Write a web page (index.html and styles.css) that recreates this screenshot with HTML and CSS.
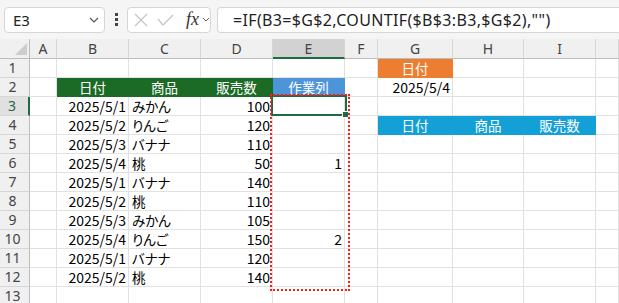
FILE: index.html
```html
<!DOCTYPE html>
<html>
<head>
	<meta charset="utf-8" />
	<title>Excel - 作業列</title>
	<link rel="stylesheet" href="styles.css">
</head>
<body>
<div class="toolbar">
	<div class="namebox">
		<span>E3</span>
		<svg class="chev" width="10" height="6" viewBox="0 0 10 6"><path d="M1 1l4 4 4-4" fill="none" stroke="#555" stroke-width="1.2"/></svg>
	</div>
	<div class="kebab"><i></i><i></i><i></i></div>
	<div class="fxbox">
		<svg width="14" height="14" viewBox="0 0 14 14"><path d="M1 1l12 12M13 1L1 13" stroke="#c4c4c4" stroke-width="1.2"/></svg>
		<svg class="ok" width="17" height="12" viewBox="0 0 17 12"><path d="M1 5l5 6L16 1" fill="none" stroke="#c4c4c4" stroke-width="1.2"/></svg>
		<span class="fx">fx</span>
		<svg width="8" height="5" viewBox="0 0 8 5"><path d="M1 1l3 3 3-3" fill="none" stroke="#666" stroke-width="1"/></svg>
	</div>
	<div class="formula">=IF(B3=$G$2,COUNTIF($B$3:B3,$G$2),"")</div>
</div>

<div class="sheet">
	<div class="row head">
		<div class="corner"><span class="tri"></span></div>
		<div>A</div><div>B</div><div>C</div><div>D</div><div class="sel">E</div><div>F</div><div>G</div><div>H</div><div>I</div><div></div>
	</div>
	<div class="row">
		<div class="rh">1</div>
		<div></div><div></div><div></div><div></div><div></div><div></div><div class="fill orange">日付</div><div></div><div></div><div></div>
	</div>
	<div class="row">
		<div class="rh">2</div>
		<div></div><div class="fill green">日付</div><div class="fill green">商品</div><div class="fill green">販売数</div><div class="fill blue">作業列</div><div></div><div class="num">2025/5/4</div><div></div><div></div><div></div>
	</div>
	<div class="row">
		<div class="rh sel">3</div>
		<div></div><div class="num">2025/5/1</div><div>みかん</div><div class="num">100</div><div></div><div></div><div></div><div></div><div></div><div></div>
	</div>
	<div class="row">
		<div class="rh">4</div>
		<div></div><div class="num">2025/5/2</div><div>りんご</div><div class="num">120</div><div></div><div></div><div class="fill cyan">日付</div><div class="fill cyan">商品</div><div class="fill cyan">販売数</div><div></div>
	</div>
	<div class="row">
		<div class="rh">5</div>
		<div></div><div class="num">2025/5/3</div><div>バナナ</div><div class="num">110</div><div></div><div></div><div></div><div></div><div></div><div></div>
	</div>
	<div class="row">
		<div class="rh">6</div>
		<div></div><div class="num">2025/5/4</div><div>桃</div><div class="num">50</div><div class="num">1</div><div></div><div></div><div></div><div></div><div></div>
	</div>
	<div class="row">
		<div class="rh">7</div>
		<div></div><div class="num">2025/5/1</div><div>バナナ</div><div class="num">140</div><div></div><div></div><div></div><div></div><div></div><div></div>
	</div>
	<div class="row">
		<div class="rh">8</div>
		<div></div><div class="num">2025/5/2</div><div>桃</div><div class="num">110</div><div></div><div></div><div></div><div></div><div></div><div></div>
	</div>
	<div class="row">
		<div class="rh">9</div>
		<div></div><div class="num">2025/5/3</div><div>みかん</div><div class="num">105</div><div></div><div></div><div></div><div></div><div></div><div></div>
	</div>
	<div class="row">
		<div class="rh">10</div>
		<div></div><div class="num">2025/5/4</div><div>りんご</div><div class="num">150</div><div class="num">2</div><div></div><div></div><div></div><div></div><div></div>
	</div>
	<div class="row">
		<div class="rh">11</div>
		<div></div><div class="num">2025/5/1</div><div>バナナ</div><div class="num">120</div><div></div><div></div><div></div><div></div><div></div><div></div>
	</div>
	<div class="row">
		<div class="rh">12</div>
		<div></div><div class="num">2025/5/2</div><div>桃</div><div class="num">140</div><div></div><div></div><div></div><div></div><div></div><div></div>
	</div>
	<div class="row">
		<div class="rh last">13</div>
		<div></div><div></div><div></div><div></div><div></div><div></div><div></div><div></div><div></div><div></div>
	</div>

	<!-- cell cursor on E3 -->
	<div class="cursor"><span class="handle"></span></div>
	<!-- red dotted frame round E3:E12 -->
	<div class="marquee"></div>
</div>
</body>
</html>
```

FILE: styles.css
```css
body{
	margin: 0;
	padding: 0;
	background-color: #fff;
	font-family: "Noto Sans CJK JP", "Noto Sans", sans-serif;
	font-size: 13.5px;
	font-feature-settings: "palt";
	color: #000;
	overflow: hidden;
}
/* barre de formule */
.toolbar{
	height: 39px;
	display: flex;
	align-items: center;
	padding: 0 0 0 4px;
	background-color: #f5f5f5;
	box-sizing: border-box;
	font-family: "Noto Sans", sans-serif;
	font-feature-settings: normal;
}
.namebox, .fxbox, .formula{
	height: 26px;
	box-sizing: border-box;
	background-color: #fff;
	border: 1px solid #d6d6d6;
	border-radius: 4px;
	display: flex;
	align-items: center;
}
.namebox{
	width: 101px;
	padding: 0 5px 0 8px;
	justify-content: space-between;
	font-size: 15px;
	color: #222;
}
.kebab{
	width: 22px;
	display: flex;
	flex-direction: column;
	align-items: center;
	gap: 2px;
}
.kebab i{
	width: 3px;
	height: 3px;
	background-color: #444;
}
.fxbox{
	width: 84px;
	padding: 0 0 0 6px;
	gap: 6px;
}
.fxbox .ok{
	margin-left: 3px;
}
.fxbox .fx{
	font-family: "Liberation Serif", serif;
	font-style: italic;
	font-size: 18px;
	color: #333;
	margin-left: 6px;
	margin-right: -3px;
}
.formula{
	flex: 1;
	margin-left: 6px;
	padding-left: 15px;
	border-right: none;
	border-radius: 4px 0 0 4px;
	font-size: 16px;
	letter-spacing: 0.35px;
	color: #222;
	white-space: nowrap;
}
/* feuille */
.sheet{
	position: relative;
}
.row{
	display: grid;
	grid-template-columns: 30px 27px 72px 72px 72px 72px 33px 75px 71px 72px 1fr;
	height: 19px;
}
.row > div{
	box-sizing: border-box;
	border-right: 1px solid #e1e1e1;
	border-bottom: 1px solid #e1e1e1;
	padding: 0 3px;
	line-height: 18px;
	white-space: nowrap;
	overflow: hidden;
}
.row.head{
	height: 20px;
}
.row.head > div{
	background-color: #f0f0f0;
	border-right-color: #d6d6d6;
	border-bottom-color: #bcbcbc;
	text-align: center;
	line-height: 19px;
	font-family: "Noto Sans", sans-serif;
	font-size: 14px;
	color: #444;
}
.row.head > div.sel{
	background-color: #d2d2d2;
	border-bottom: 2px solid #1e6b40;
	line-height: 19px;
}
.row.head > div.corner{
	position: relative;
	border-right-color: #bcbcbc;
}
.tri{
	position: absolute;
	right: 2px;
	bottom: 3px;
	width: 0;
	height: 0;
	border-left: 12px solid transparent;
	border-bottom: 12px solid #cdcdcd;
}
.rh{
	background-color: #f0f0f0;
	border-right-color: #bcbcbc !important;
	border-bottom-color: #d6d6d6 !important;
	text-align: center;
	padding: 0 4px 0 0 !important;
	line-height: 17px !important;
	font-family: "Noto Sans", sans-serif;
	font-size: 14px;
	color: #444;
}
.rh.last{
	line-height: 15px !important;
	padding-top: 1px !important;
}
.rh.sel{
	background-color: #e0e0e0;
	color: #1e6b40;
	border-right: 2px solid #1e6b40 !important;
}
.num{
	text-align: right;
	padding-right: 2px !important;
	font-size: 14px;
	font-feature-settings: normal;
}
.fill{
	color: #fff;
	text-align: center;
}
.green{
	background-color: #1b6b26;
	border-color: #1b6b26 !important;
}
.blue{
	background-color: #4e94d9;
	border-color: #4e94d9 !important;
}
.orange{
	background-color: #ed7d31;
	border-color: #ed7d31 !important;
}
.cyan{
	background-color: #12a0d7;
	border-color: #12a0d7 !important;
}
/* curseur de cellule */
.cursor{
	position: absolute;
	left: 271px;
	top: 56px;
	width: 76px;
	height: 21px;
	box-sizing: border-box;
	border: 2px solid #1e6b40;
}
.handle{
	position: absolute;
	right: -4px;
	bottom: -4px;
	width: 5px;
	height: 5px;
	background-color: #1e6b40;
	border: 1px solid #fff;
}
/* cadre rouge */
.marquee{
	position: absolute;
	left: 270px;
	top: 55px;
	width: 80px;
	height: 197px;
	box-sizing: border-box;
	border: 2px dotted #ff1a1a;
}
```
